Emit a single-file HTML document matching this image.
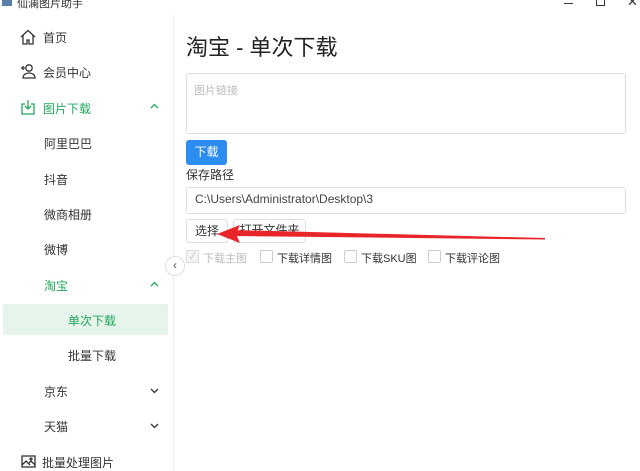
<!DOCTYPE html><html><head><meta charset="utf-8"><style>
body{margin:0;width:640px;height:471px;background:#fff;font-family:"Liberation Sans","Noto Sans CJK SC",sans-serif;position:relative;overflow:hidden;color:#333}
.a{position:absolute}
.t{font-size:12px}
.g{color:#22a95c}
</style></head><body>
<div class="a" style="left:2px;top:-4px;width:10px;height:10px;background:#5a7fa8"></div>
<div class="a t" style="left:17px;top:-5px;font-size:11px">仙澜图片助手</div>
<div class="a" style="left:564px;top:3px;width:9px;height:1px;background:#333"></div>
<div class="a" style="left:596px;top:-3px;width:7px;height:7px;border:1px solid #333"></div>
<div class="a" style="left:627px;top:-6px;font-size:13px">✕</div>
<div class="a" style="left:173px;top:15px;width:1px;height:456px;background:#eee"></div>
<svg class="a" style="left:20px;top:29px" width="16" height="16" viewBox="0 0 16 16" fill="none" stroke="#333" stroke-width="1.3"><path d="M1 8L8 1.5 15 8M3 6.5V15h4v-4h2v4h4V6.5"/></svg>
<div class="a t" style="left:43px;top:29px">首页</div>
<svg class="a" style="left:20px;top:63px" width="16" height="16" viewBox="0 0 16 16" fill="none" stroke="#333" stroke-width="1.3"><circle cx="9" cy="5" r="3.2"/><path d="M3 15c0-3.5 3-5 6-5s6 1.5 6 5zM1 5h4M3 3v4"/></svg>
<div class="a t" style="left:43px;top:64px">会员中心</div>
<svg class="a" style="left:21px;top:99px" width="14" height="16" viewBox="0 0 14 16" fill="none" stroke="#22a95c" stroke-width="1.3"><path d="M4 5H1v10h12V5h-3M7 1v9M4 7l3 3 3-3"/></svg>
<div class="a t g" style="left:43px;top:100px">图片下载</div>
<svg class="a" style="left:150px;top:103px" width="9" height="6"><path d="M1 5L4.5 1.5 8 5" fill="none" stroke="#22a95c" stroke-width="1.3"/></svg>
<div class="a t" style="left:44px;top:135px">阿里巴巴</div>
<div class="a t" style="left:44px;top:171px">抖音</div>
<div class="a t" style="left:44px;top:206px">微商相册</div>
<div class="a t" style="left:44px;top:241px">微博</div>
<div class="a t g" style="left:44px;top:277px">淘宝</div>
<svg class="a" style="left:150px;top:281px" width="9" height="6"><path d="M1 5L4.5 1.5 8 5" fill="none" stroke="#22a95c" stroke-width="1.3"/></svg>
<div class="a" style="left:3px;top:304px;width:165px;height:31px;background:#e6f4ec;border-radius:2px"></div>
<div class="a t g" style="left:68px;top:312px">单次下载</div>
<div class="a t" style="left:68px;top:347px">批量下载</div>
<div class="a t" style="left:44px;top:383px">京东</div>
<svg class="a" style="left:150px;top:388px" width="9" height="6"><path d="M1 1L4.5 4.5 8 1" fill="none" stroke="#333" stroke-width="1.3"/></svg>
<div class="a t" style="left:44px;top:418px">天猫</div>
<svg class="a" style="left:150px;top:423px" width="9" height="6"><path d="M1 1L4.5 4.5 8 1" fill="none" stroke="#333" stroke-width="1.3"/></svg>
<svg class="a" style="left:21px;top:455px" width="15" height="13" viewBox="0 0 15 13" fill="none" stroke="#333" stroke-width="1.3"><rect x="1" y="1" width="13" height="11"/><path d="M1 10l4-4 4 4M8 8l2-2 4 4"/><circle cx="10" cy="4" r="1"/></svg>
<div class="a t" style="left:42px;top:454px">批量处理图片</div>
<div class="a" style="left:165px;top:256px;width:18px;height:18px;border-radius:50%;background:#fff;border:1px solid #ddd;font-size:12px;text-align:center;line-height:17px;color:#555">‹</div>
<div class="a" style="left:186px;top:30px;font-size:22px;color:#222">淘宝 - 单次下载</div>
<div class="a" style="left:186px;top:73px;width:438px;height:59px;border:1px solid #dcdee2;border-radius:3px"></div>
<div class="a" style="left:194px;top:82px;font-size:11px;color:#bbb">图片链接</div>
<div class="a" style="left:186px;top:140px;width:41px;height:25px;background:#2d8cf0;border-radius:3px;color:#fff;font-size:12px;text-align:center;line-height:25px">下载</div>
<div class="a t" style="left:186px;top:166px">保存路径</div>
<div class="a" style="left:186px;top:187px;width:438px;height:25px;border:1px solid #dcdee2;border-radius:3px"></div>
<div class="a t" style="left:195px;top:192px;color:#444">C:\Users\Administrator\Desktop\3</div>
<div class="a" style="left:186px;top:219px;width:40px;height:22px;border:1px solid #dcdee2;border-radius:3px;font-size:12px;text-align:center;line-height:22px">选择</div>
<div class="a" style="left:233px;top:219px;width:71px;height:22px;border:1px solid #dcdee2;border-radius:3px;font-size:12px;text-align:center;line-height:20px">打开文件夹</div>
<svg class="a" style="left:210px;top:222px" width="340" height="22"><path d="M22 8L335 16 335 17.5 22 14z" fill="#e8262a"/><path d="M7 12L30 3 26 12 30 21z" fill="#e8262a"/></svg>
<div class="a" style="left:186px;top:250px;width:11px;height:11px;border:1px solid #ddd;background:#f4f4f4;color:#bbb;font-size:9px;line-height:11px;text-align:center">✓</div>
<div class="a" style="left:203px;top:250px;font-size:11px;color:#bbb">下载主图</div>
<div class="a" style="left:260px;top:250px;width:11px;height:11px;border:1px solid #ccc;border-radius:2px"></div>
<div class="a" style="left:277px;top:250px;font-size:11px">下载详情图</div>
<div class="a" style="left:344px;top:250px;width:11px;height:11px;border:1px solid #ccc;border-radius:2px"></div>
<div class="a" style="left:361px;top:250px;font-size:11px">下载SKU图</div>
<div class="a" style="left:428px;top:250px;width:11px;height:11px;border:1px solid #ccc;border-radius:2px"></div>
<div class="a" style="left:445px;top:250px;font-size:11px">下载评论图</div>
</body></html>
